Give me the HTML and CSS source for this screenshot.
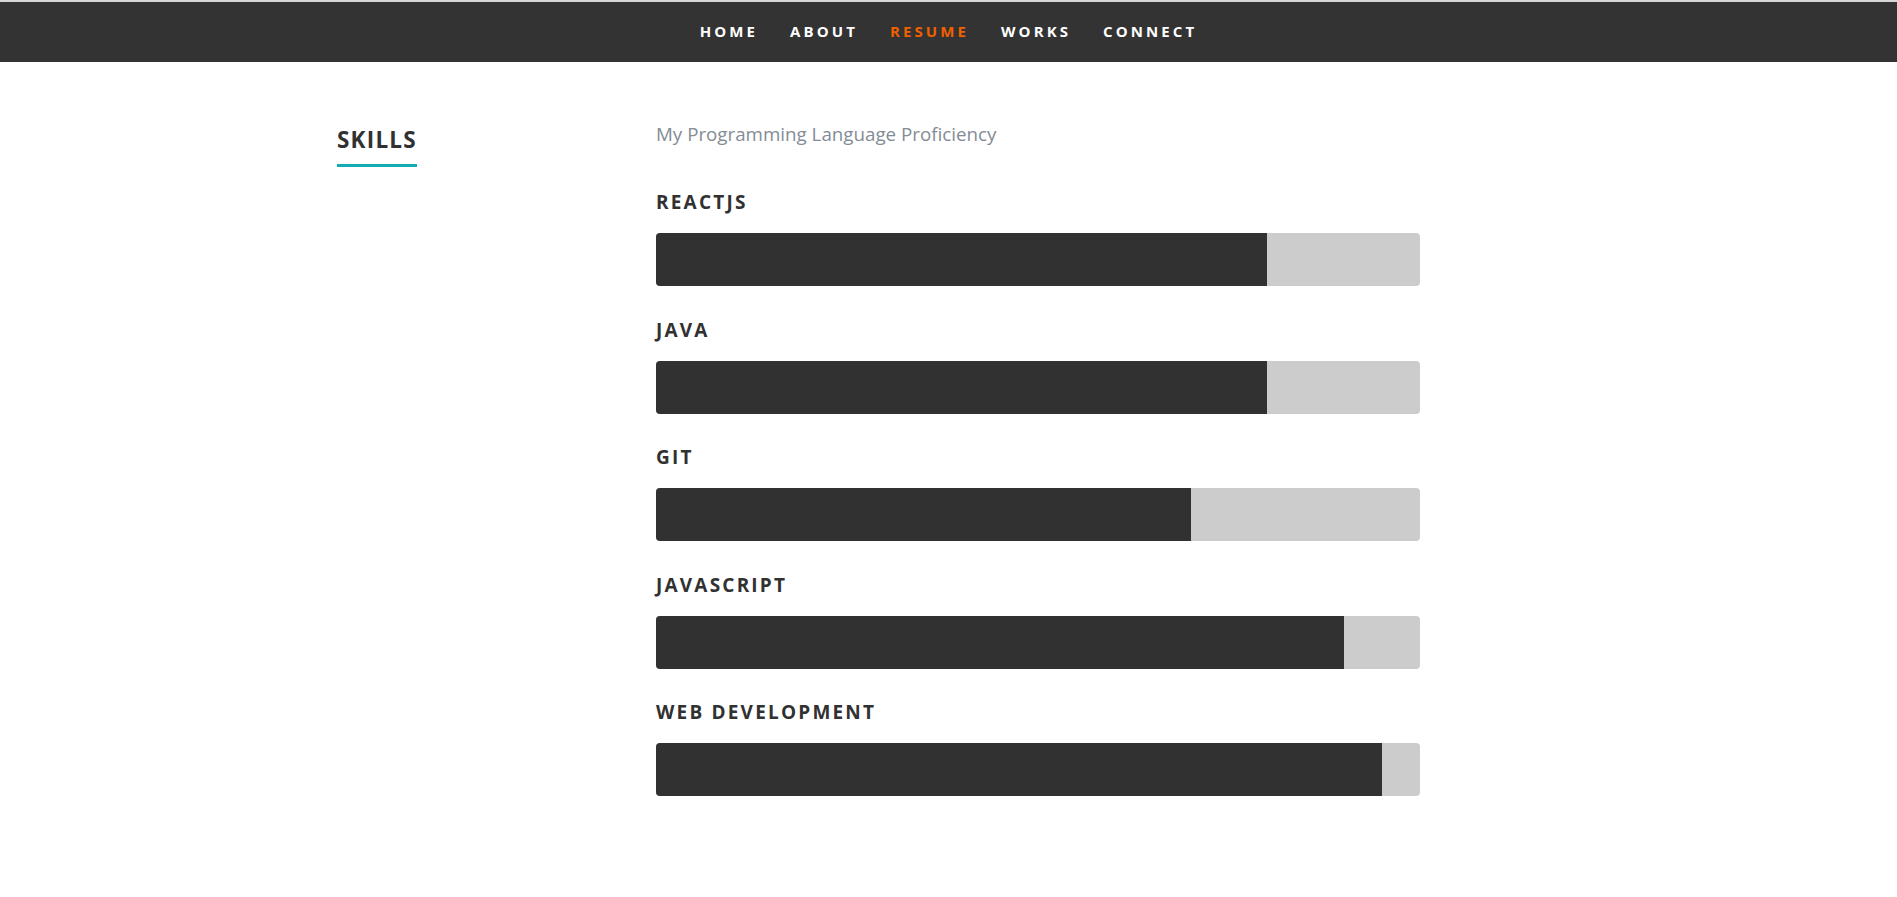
FILE: index.html
```html
<!DOCTYPE html>
<html lang="en">
<head>
<meta charset="utf-8">
<title>Resume - Skills</title>
<link rel="stylesheet" href="styles.css">
</head>
<body>
<nav class="nav">
  <ul class="nav-list">
    <li><a class="nav-link" href="#home">Home</a></li>
    <li><a class="nav-link" href="#about">About</a></li>
    <li><a class="nav-link current" href="#resume">Resume</a></li>
    <li><a class="nav-link" href="#works">Works</a></li>
    <li><a class="nav-link" href="#connect">Connect</a></li>
  </ul>
</nav>
<section class="skills-section">
  <div class="header-col">
    <h1 class="section-title">Skills</h1>
  </div>
  <div class="main-col">
    <p class="intro">My Programming Language Proficiency</p>
    <ul class="skills">
      <li class="skill">
        <em class="skill-name">ReactJS</em>
        <div class="bar"><span class="fill" style="width:80%"></span></div>
      </li>
      <li class="skill">
        <em class="skill-name">Java</em>
        <div class="bar"><span class="fill" style="width:80%"></span></div>
      </li>
      <li class="skill">
        <em class="skill-name">Git</em>
        <div class="bar"><span class="fill" style="width:70%"></span></div>
      </li>
      <li class="skill">
        <em class="skill-name">JavaScript</em>
        <div class="bar"><span class="fill" style="width:90%"></span></div>
      </li>
      <li class="skill">
        <em class="skill-name">Web Development</em>
        <div class="bar"><span class="fill" style="width:95%"></span></div>
      </li>
    </ul>
  </div>
</section>
</body>
</html>
```
FILE: styles.css
```css
* { box-sizing: border-box; }

html, body {
  margin: 0;
  padding: 0;
  background: #fff;
}

body {
  font-family: "Open Sans", "Liberation Sans", sans-serif;
  color: #313131;
}

.nav {
  border-top: 2px solid #d6d6d6;
  background: #333333;
  height: 62px;
}

.nav-list {
  list-style: none;
  margin: 0;
  padding: 0;
  height: 60px;
  display: flex;
  justify-content: center;
  align-items: flex-start;
}

.nav-link {
  display: block;
  padding: 0 16px 0 16px;
  font-size: 15px;
  line-height: 58px;
  font-weight: 700;
  letter-spacing: 3.1px;
  text-transform: uppercase;
  text-decoration: none;
  color: #ffffff;
}

.nav-link.current {
  color: #f06000;
}

.skills-section {
  width: 1275px;
  margin: 0 auto;
  padding: 0 25px 60px 26px;
  display: grid;
  grid-template-columns: 319px 764px;
}

.header-col {
  padding-top: 63px;
}

.section-title {
  display: inline-block;
  margin: 0;
  font-size: 22.5px;
  line-height: 30px;
  font-weight: 700;
  letter-spacing: 1.2px;
  text-transform: uppercase;
  color: #313131;
  padding-bottom: 9px;
  border-bottom: 3px solid #11abb0;
}

.main-col {
  padding-top: 57px;
}

.intro {
  margin: 0;
  font-size: 18.75px;
  line-height: 30px;
  color: #838c95;
}

.skills {
  list-style: none;
  margin: 41px 0 0 0;
  padding: 0;
}

.skill {
  margin-bottom: 31.6px;
}

.skill-name {
  display: block;
  font-style: normal;
  font-size: 19px;
  line-height: 24px;
  font-weight: 700;
  letter-spacing: 2.2px;
  text-transform: uppercase;
  color: #313131;
  margin-bottom: 19px;
}

.bar {
  height: 53px;
  background: #cccccc;
  border-radius: 4px;
  display: flex;
}

.fill {
  display: block;
  height: 100%;
  background: #313131;
  border-radius: 4px 0 0 4px;
}
```
